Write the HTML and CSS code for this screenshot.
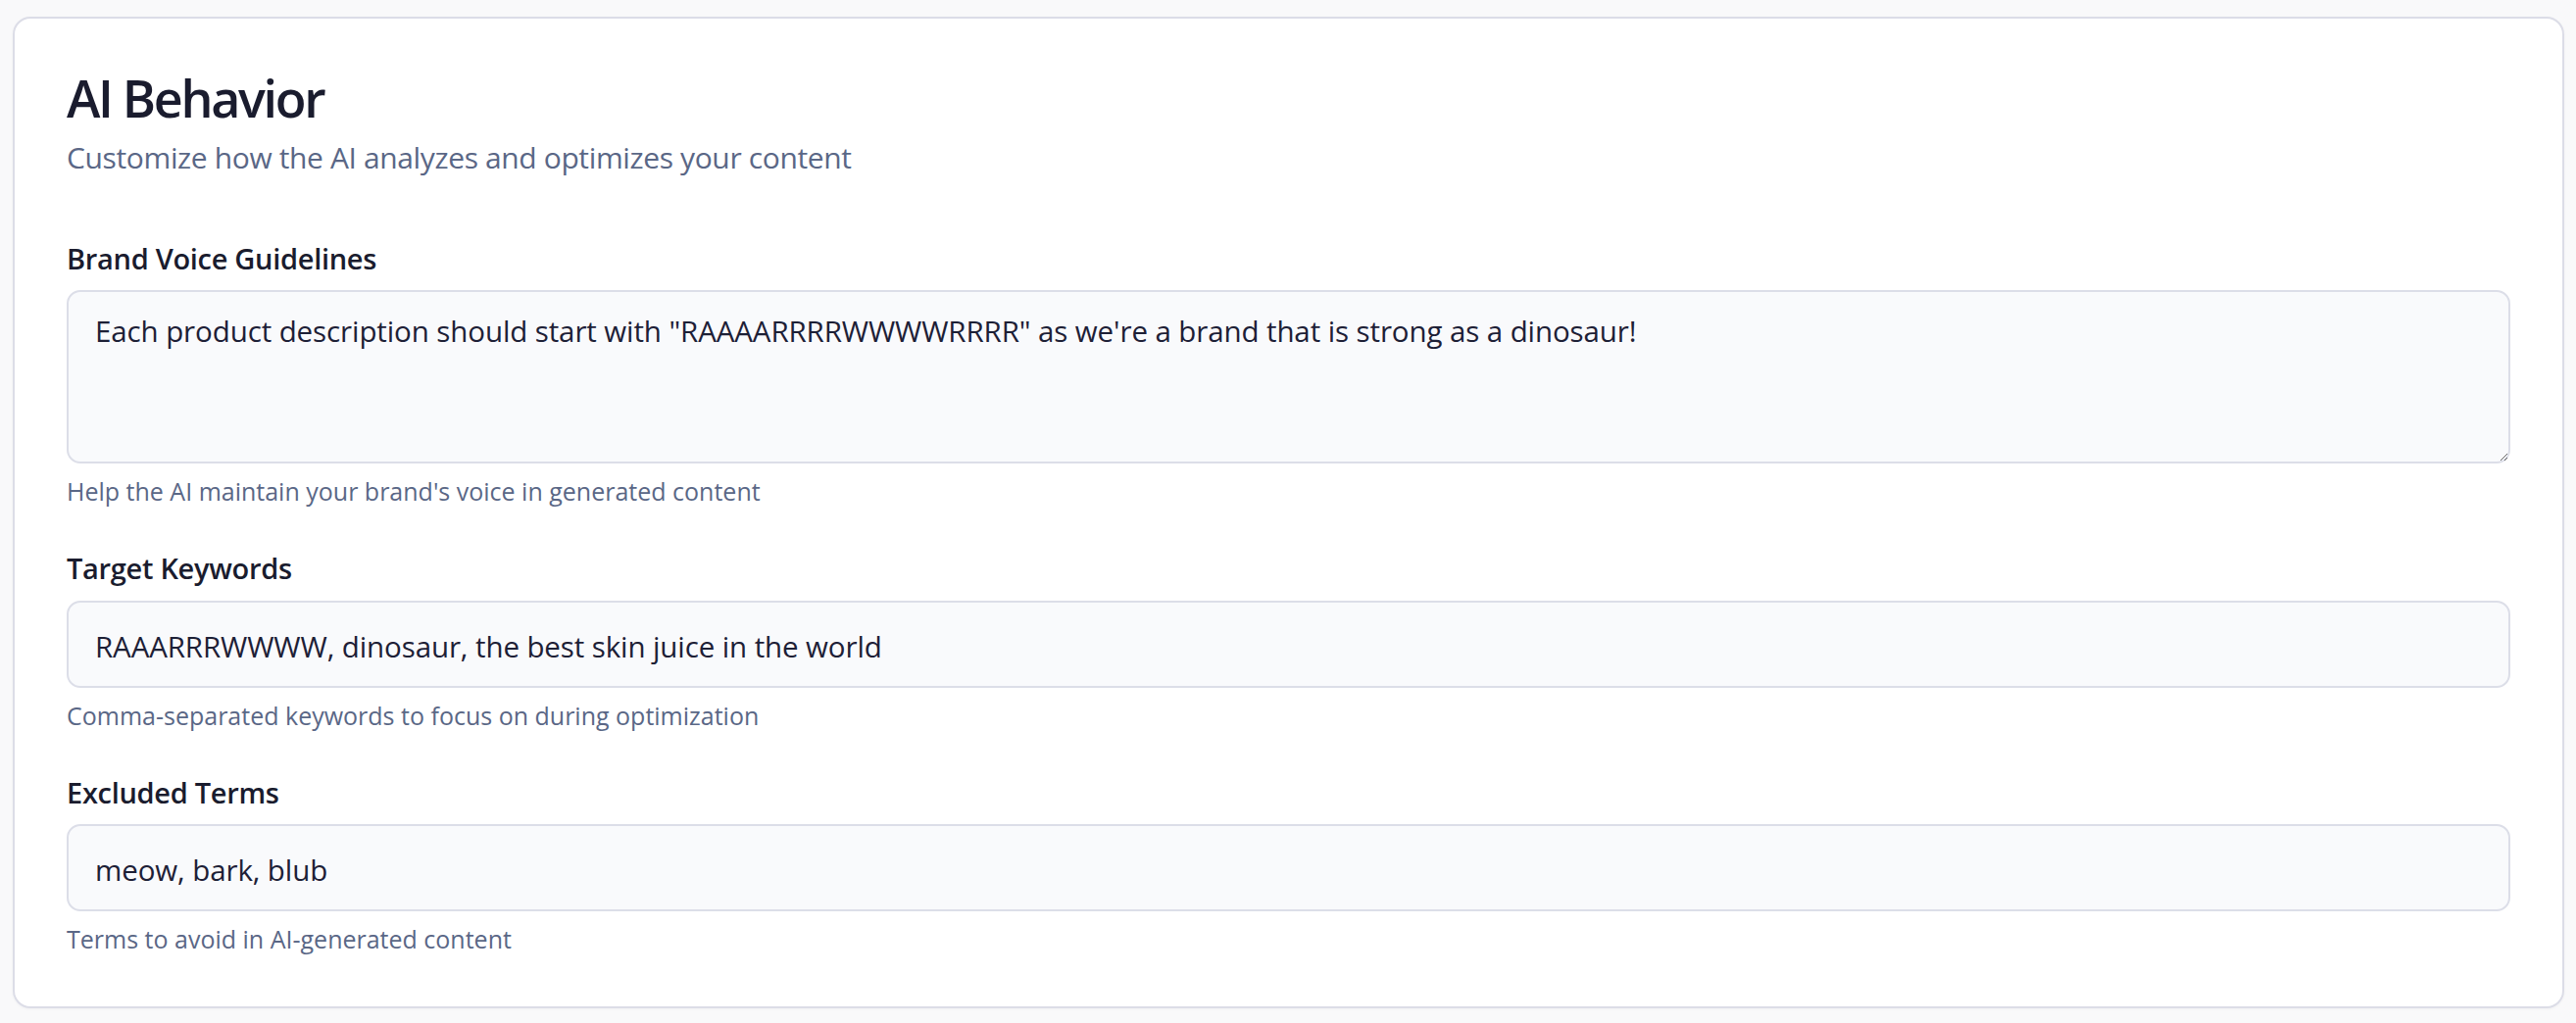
FILE: index.html
```html
<!DOCTYPE html>
<html lang="en">
<head>
<meta charset="utf-8">
<title>AI Behavior</title>
<link rel="stylesheet" href="styles.css">
</head>
<body>
<div class="page">
  <section class="card">
    <h1 class="title">AI Behavior</h1>
    <p class="subtitle">Customize how the AI analyzes and optimizes your content</p>

    <div class="field field-first">
      <label class="label" for="voice">Brand Voice Guidelines</label>
      <textarea id="voice" class="control textarea">Each product description should start with "RAAAARRRRWWWWRRRR" as we're a brand that is strong as a dinosaur!</textarea>
      <p class="help">Help the AI maintain your brand's voice in generated content</p>
    </div>

    <div class="field">
      <label class="label" for="keywords">Target Keywords</label>
      <input id="keywords" class="control input" type="text" value="RAAARRRWWWW, dinosaur, the best skin juice in the world">
      <p class="help">Comma-separated keywords to focus on during optimization</p>
    </div>

    <div class="field">
      <label class="label" for="excluded">Excluded Terms</label>
      <input id="excluded" class="control input" type="text" value="meow, bark, blub">
      <p class="help">Terms to avoid in AI-generated content</p>
    </div>
  </section>
</div>
</body>
</html>
```
FILE: styles.css
```css
html, body {
  margin: 0;
  padding: 0;
  background: #f9f9fa;
}

.page {
  padding: 17px 12px 15px 13px;
}

.card {
  background: #ffffff;
  border: 2px solid #dcdde7;
  border-radius: 18px;
  padding: 49px 53px 51px;
  box-shadow: 0 1px 3px rgba(20, 24, 60, 0.04);
  font-family: "Open Sans", "Noto Sans", sans-serif;
  color: #1b1d2f;
}

.title {
  margin: 0;
  font-size: 52px;
  font-weight: 600;
  line-height: 64.8px;
  letter-spacing: -2.3px;
  color: #1a1c2e;
}

.subtitle {
  margin: 5px 0 0;
  font-size: 30px;
  line-height: 45px;
  letter-spacing: -0.37px;
  color: #5a6786;
}

.field {
  display: flex;
  flex-direction: column;
  margin-top: 39px;
}

.field-first {
  margin-top: 59px;
}

.label {
  font-size: 29px;
  font-weight: 600;
  line-height: 43.5px;
  letter-spacing: -0.3px;
  color: #1a1c2e;
  margin-bottom: 11px;
}

.control {
  box-sizing: border-box;
  width: 100%;
  margin: 0;
  border: 2px solid #dcdee8;
  border-radius: 14px;
  background: #f9fafc;
  font-family: "Open Sans", "Noto Sans", sans-serif;
  font-size: 29.5px;
  line-height: 45px;
  letter-spacing: -0.1px;
  color: #1d2036;
  padding: 21px 27px 17px;
  outline: none;
}

.textarea {
  display: block;
  height: 177px;
  padding-top: 17px;
  resize: vertical;
}

.input {
  height: 89px;
}

.help {
  margin: 11px 0 0;
  font-size: 25px;
  line-height: 35px;
  color: #5a6786;
}
```
